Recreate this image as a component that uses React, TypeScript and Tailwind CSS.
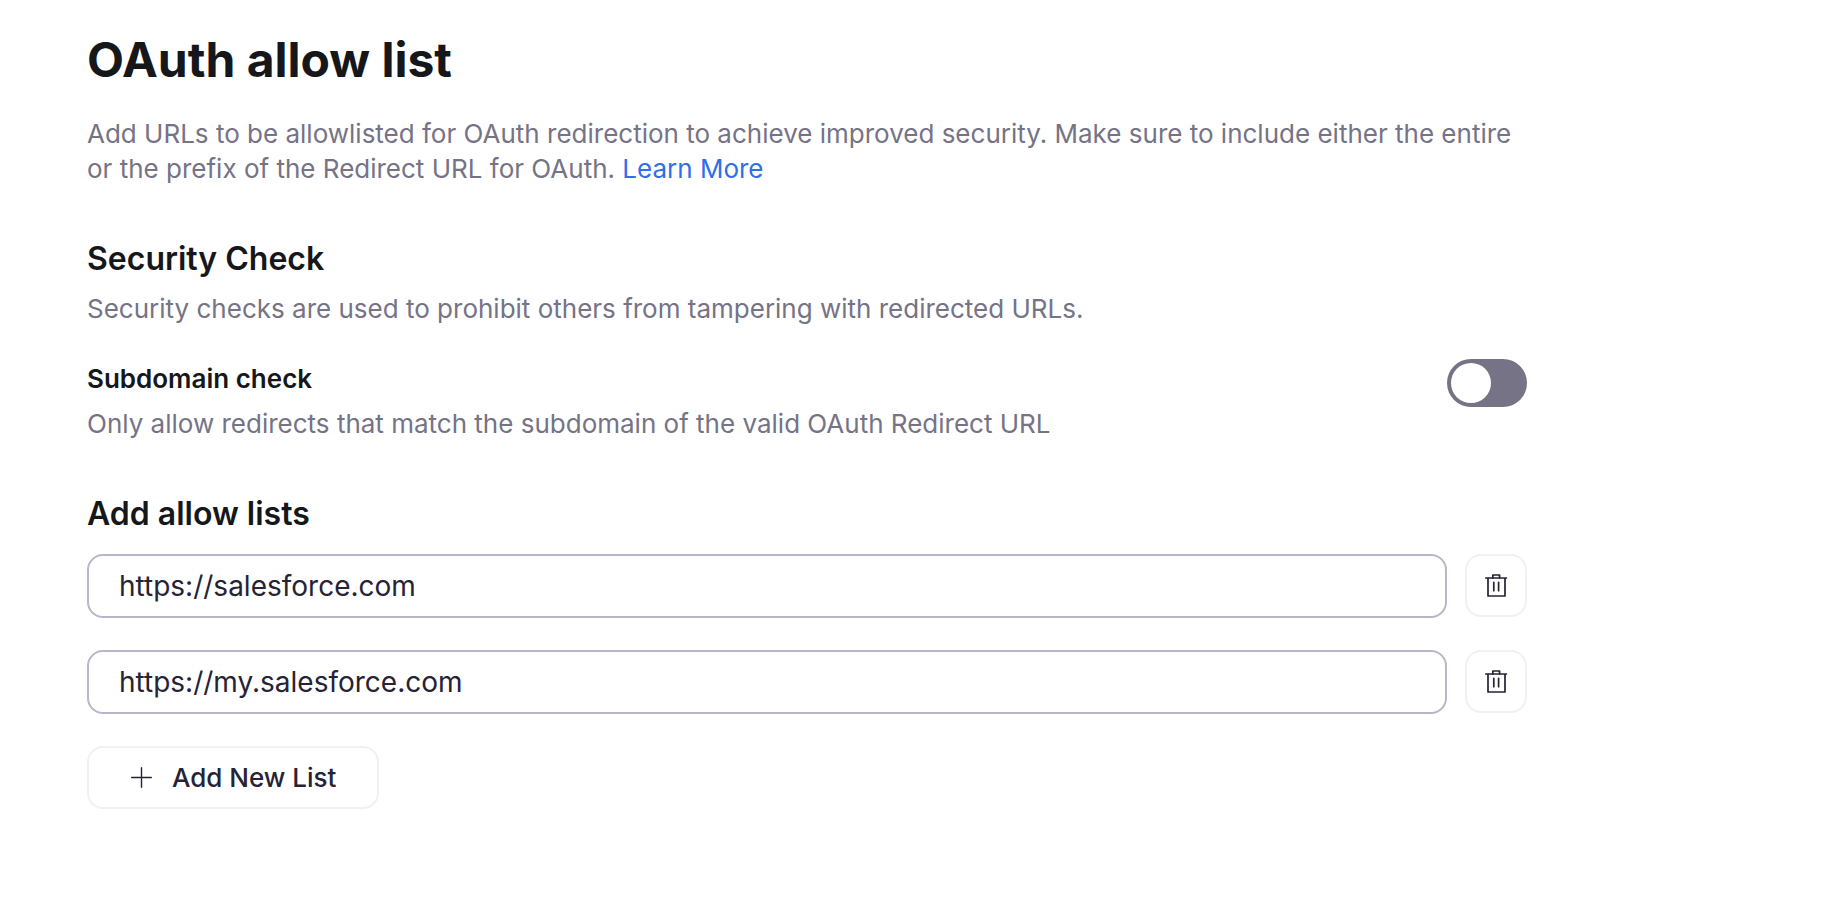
import React, { useState } from 'react';

const TrashIcon: React.FC = () => (
  <svg width="24" height="23" viewBox="0 0 24 23" fill="none" stroke="currentColor" strokeWidth="1.7" strokeLinecap="round" strokeLinejoin="round" aria-hidden="true">
    <path d="M1.8 4h20.6M4 4v18h17V4" />
    <path d="M8.8 4V1h6.8v3M9.8 8.3v8.4M14.6 8.3v8.4" />
  </svg>
);

const PlusIcon: React.FC = () => (
  <svg width="23" height="23" viewBox="0 0 23 23" fill="none" stroke="currentColor" strokeWidth="1.4" strokeLinecap="round" aria-hidden="true">
    <path d="M11.5 1.7v19.6M1.7 11.5h19.6" />
  </svg>
);

export default function App() {
  const [subdomainCheck, setSubdomainCheck] = useState(false);
  const [urls, setUrls] = useState<string[]>(['https://salesforce.com', 'https://my.salesforce.com']);

  const updateUrl = (index: number, value: string) => {
    setUrls(urls.map((url, i) => (i === index ? value : url)));
  };

  const removeUrl = (index: number) => {
    setUrls(urls.filter((_, i) => i !== index));
  };

  return (
    <div className="min-h-screen bg-white px-[87px] py-[31px] font-['Inter',sans-serif] text-[26px] leading-[35px] text-[#757385]">
      <main className="w-full max-w-[1440px]">
        <h1 className="text-[48px] font-bold leading-[58px] text-[#15171a]">OAuth allow list</h1>
        <p className="mt-[27px]">
          Add URLs to be allowlisted for OAuth redirection to achieve improved security. Make sure to include either the
          entire or the prefix of the Redirect URL for OAuth.{' '}
          <a href="#learn-more" className="text-[#2e6fea]">
            Learn More
          </a>
        </p>

        <section className="mt-[53px]">
          <h2 className="text-[32px] font-semibold leading-[40px] text-[#15171a]">Security Check</h2>
          <p className="mt-3">Security checks are used to prohibit others from tampering with redirected URLs.</p>

          <div className="mt-[33px] flex items-start justify-between gap-8">
            <div className="pt-0.5">
              <label htmlFor="subdomain-check" className="block font-semibold text-[#15171a]">
                Subdomain check
              </label>
              <p id="subdomain-hint" className="mt-[10px]">
                Only allow redirects that match the subdomain of the valid OAuth Redirect URL
              </p>
            </div>
            <input
              id="subdomain-check"
              type="checkbox"
              role="switch"
              aria-describedby="subdomain-hint"
              checked={subdomainCheck}
              onChange={(e) => setSubdomainCheck(e.target.checked)}
              className="h-12 w-20 shrink-0 cursor-pointer appearance-none rounded-full bg-[#757385] p-1 before:block before:size-10 before:rounded-full before:bg-white before:transition-transform checked:bg-[#2e6fea] checked:before:translate-x-8"
            />
          </div>
        </section>

        <section className="mt-[53px]">
          <h2 className="text-[32px] font-semibold leading-[40px] text-[#15171a]">Add allow lists</h2>
          <div className="mt-5 flex flex-col items-start gap-8">
            {urls.map((url, index) => (
              <div key={index} className="flex w-full gap-[18px]">
                <input
                  type="text"
                  aria-label={`Allowed URL ${index + 1}`}
                  value={url}
                  onChange={(e) => updateUrl(index, e.target.value)}
                  className="h-16 min-w-0 flex-1 rounded-2xl border-2 border-[#b9b5ca] px-[30px] text-[28px] text-[#252334] outline-none"
                />
                <button
                  type="button"
                  aria-label={`Delete URL ${index + 1}`}
                  onClick={() => removeUrl(index)}
                  className="flex h-[63px] w-[62px] shrink-0 items-center justify-center rounded-2xl border-2 border-[#f1f0f5] text-[#252334]"
                >
                  <TrashIcon />
                </button>
              </div>
            ))}
            <button
              type="button"
              onClick={() => setUrls([...urls, ''])}
              className="flex h-[63px] items-center gap-[19px] rounded-2xl border-2 border-[#f1f0f5] px-[41px] font-medium text-[#252334]"
            >
              <PlusIcon />
              Add New List
            </button>
          </div>
        </section>
      </main>
    </div>
  );
}
